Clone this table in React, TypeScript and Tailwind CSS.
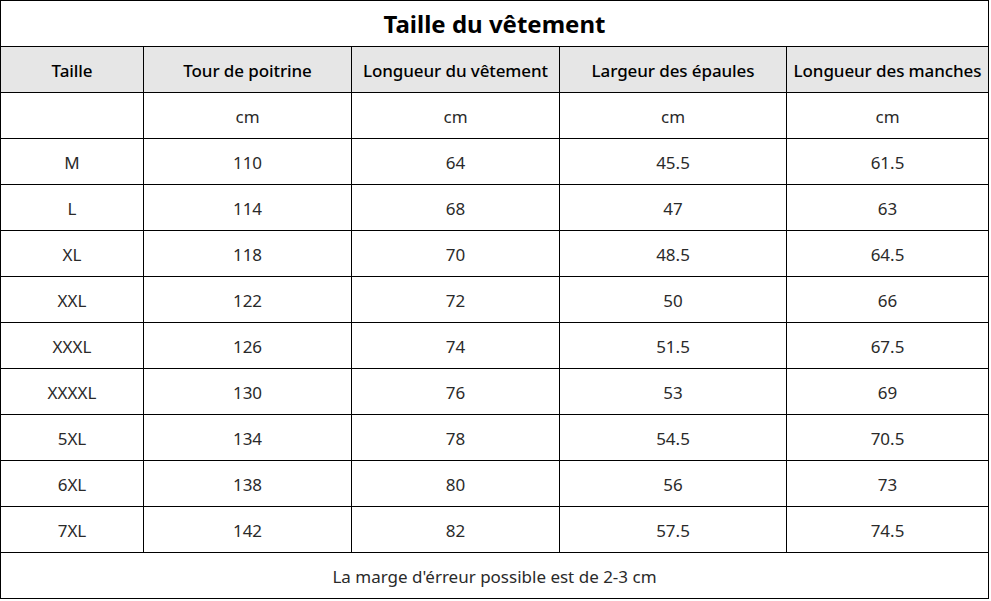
const headers = ['Taille', 'Tour de poitrine', 'Longueur du vêtement', 'Largeur des épaules', 'Longueur des manches'];

const rows = [
  ['', 'cm', 'cm', 'cm', 'cm'],
  ['M', '110', '64', '45.5', '61.5'],
  ['L', '114', '68', '47', '63'],
  ['XL', '118', '70', '48.5', '64.5'],
  ['XXL', '122', '72', '50', '66'],
  ['XXXL', '126', '74', '51.5', '67.5'],
  ['XXXXL', '130', '76', '53', '69'],
  ['5XL', '134', '78', '54.5', '70.5'],
  ['6XL', '138', '80', '56', '73'],
  ['7XL', '142', '82', '57.5', '74.5'],
];

const widths = ['w-[143px]', 'w-[208px]', 'w-[208px]', 'w-[227px]', 'w-[202px]'];

export default function App() {
  return (
    <div className="bg-white w-[991px] h-[601px] font-['Noto_Sans',sans-serif]">
      <table className="border-collapse w-[988px] table-fixed text-center">
        <colgroup>
          {widths.map((w, i) => (
            <col key={i} className={w} />
          ))}
        </colgroup>
        <tbody>
          <tr className="h-[46px]">
            <td colSpan={5} className="border border-black p-0 pt-px text-[24px] font-bold text-black">
              Taille du vêtement
            </td>
          </tr>
          <tr className="h-[46px] bg-[#e6e6e6]">
            {headers.map((h) => (
              <td key={h} className="border border-black p-0 pt-0.5 text-[17px] font-medium text-black whitespace-nowrap tracking-[-0.1px]">
                {h}
              </td>
            ))}
          </tr>
          {rows.map((r, i) => (
            <tr key={i} className="h-[46px]">
              {r.map((c, j) => (
                <td key={j} className="border border-black p-0 pt-0.5 text-[17px] font-normal text-[#2a2a2a]">
                  {c}
                </td>
              ))}
            </tr>
          ))}
          <tr className="h-[46px]">
            <td colSpan={5} className="border border-black p-0 pt-0.5 text-[17px] font-normal text-[#2a2a2a]">
              La marge d'érreur possible est de 2-3 cm
            </td>
          </tr>
        </tbody>
      </table>
    </div>
  );
}
